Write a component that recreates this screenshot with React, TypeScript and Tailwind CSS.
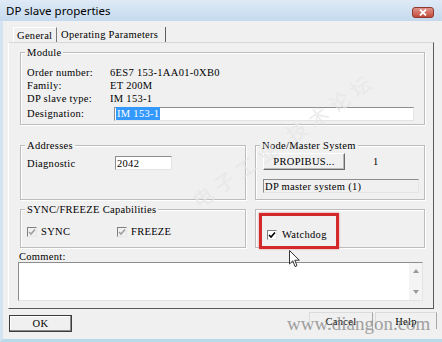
import React from "react";

const mono = "font-['Liberation_Serif',serif] text-[10.5px] leading-[13px] tracking-[0.3px] text-black";

function GroupBox({ label, className, children }: { label?: string; className?: string; children?: React.ReactNode }) {
  return (
    <div className={`relative border border-[#bcbcbc] shadow-[1px_1px_0_#ffffff,inset_1px_1px_0_#ffffff] ${className ?? ""}`}>
      {label && (
        <span className={`absolute -top-[7px] left-[4px] bg-[#f0f0f0] px-[2px] ${mono}`}>{label}</span>
      )}
      {children}
    </div>
  );
}

function Field({ children, className }: { children?: React.ReactNode; className?: string }) {
  return (
    <div
      className={`border-t border-l border-[#8d8d8d] border-r border-b border-r-[#e4e4e4] border-b-[#e4e4e4] flex items-center ${className ?? ""}`}
    >
      {children}
    </div>
  );
}

function CheckBox({ checked, disabled }: { checked?: boolean; disabled?: boolean }) {
  return (
    <span
      className={`inline-flex h-[10px] w-[10px] items-center justify-center border-t border-l border-[#808080] border-r border-b border-r-[#e8e8e8] border-b-[#e8e8e8] ${
        disabled ? "bg-[#f0f0f0]" : "bg-white"
      }`}
    >
      {checked && (
        <svg width="8" height="8" viewBox="0 0 8 8">
          <path d="M1 4 L3 6 L7 1.5" fill="none" stroke={disabled ? "#a0a0a0" : "#000"} strokeWidth="1.6" />
        </svg>
      )}
    </span>
  );
}

function Row({ label, value }: { label: string; value: string }) {
  return (
    <div className={`flex h-[13px] items-center ${mono}`}>
      <span className="w-[84px] pl-[1px]">{label}</span>
      <span>{value}</span>
    </div>
  );
}

export default function App() {
  return (
    <div className="relative flex h-[342px] w-[442px] flex-col overflow-hidden bg-[#f0f0f0]">
      {/* title bar */}
      <div className="flex h-[21px] items-center justify-between bg-gradient-to-b from-[#dfeaf6] to-[#c5d9ee] pl-[6px] pr-[8px]">
        <span className="font-['Noto_Sans',sans-serif] text-[11.5px] text-black">DP slave properties</span>
        <div className="mt-[3px] flex h-[11px] w-[22px] items-center justify-center rounded-[3px] border border-[#8c3a30] bg-gradient-to-b from-[#e0938a] to-[#c2493a]">
          <svg width="8" height="7" viewBox="0 0 8 7">
            <path d="M1 0.5 L7 6.5 M7 0.5 L1 6.5" stroke="#fff" strokeWidth="1.8" />
          </svg>
        </div>
      </div>

      <div className="flex flex-1 flex-col border-l-[3px] border-b-[3px] border-l-[#d4e3f1] border-b-[#b8dbe9]">
        {/* tabs */}
        <div className="mt-[6px] flex h-[15px] pl-[10px]">
          <div className={`flex items-center border-l border-t border-white border-r border-r-[#7a7a7a] px-[3px] w-[44px] ${mono}`}>
            General
          </div>
          <div className={`flex items-center border-r border-[#5e5e5e] pl-[4px] w-[109px] ${mono}`}>
            Operating Parameters
          </div>
        </div>

        {/* tab panel */}
        <div className="ml-[5px] flex h-[267px] w-[426px] flex-col border-t border-l border-t-[#d8d8d8] border-l-white border-r border-b border-r-[#5a5a5a] border-b-[#5a5a5a] pt-[9px]">
          <GroupBox label="Module" className="ml-[11px] h-[73px] w-[405px] pl-[5px] pt-[13px]">
            <Row label="Order number:" value="6ES7 153-1AA01-0XB0" />
            <Row label="Family:" value="ET 200M" />
            <Row label="DP slave type:" value="IM 153-1" />
            <div className={`mt-[1px] flex h-[15px] items-center ${mono}`}>
              <span className="w-[88px] pl-[1px]">Designation:</span>
              <Field className="h-[14px] w-[300px] bg-white pl-[1px]">
                <span className="bg-[#3399ff] px-[1px] text-white">IM 153-1</span>
              </Field>
            </div>
          </GroupBox>

          <div className="ml-[11px] mt-[20px] flex gap-[9px]">
            <GroupBox label="Addresses" className="h-[55px] w-[226px] pl-[5px] pt-[10px]">
              <div className={`flex items-center ${mono}`}>
                <span className="w-[89px] pl-[1px]">Diagnostic</span>
                <Field className="h-[14px] w-[57px] bg-white pl-[1px]">2042</Field>
              </div>
            </GroupBox>
            <GroupBox label="Node/Master System" className="h-[55px] w-[170px] pl-[7px] pt-[7px]">
              <div className="flex items-center">
                <div className={`flex h-[17px] w-[82px] items-center justify-center border-t border-l border-white border-r border-b border-r-[#6a6a6a] border-b-[#6a6a6a] shadow-[inset_-1px_-1px_0_#b8b8b8] ${mono}`}>
                  PROPIBUS...
                </div>
                <span className={`ml-[28px] ${mono}`}>1</span>
              </div>
              <Field className={`mt-[9px] h-[14px] w-[156px] pl-[1px] ${mono}`}>DP master system (1)</Field>
            </GroupBox>
          </div>

          <div className="ml-[11px] mt-[9px] flex gap-[9px]">
            <GroupBox label="SYNC/FREEZE Capabilities" className="flex h-[39px] w-[226px] items-start pl-[6px] pt-[15px]">
              <div className={`flex w-[90px] items-center gap-[4px] ${mono} text-[#9a9a9a]`}>
                <CheckBox checked disabled />
                <span>SYNC</span>
              </div>
              <div className={`flex items-center gap-[4px] ${mono} text-[#9a9a9a]`}>
                <CheckBox checked disabled />
                <span>FREEZE</span>
              </div>
            </GroupBox>
            <GroupBox className="h-[39px] w-[170px] pl-[3px] pt-[3px]">
              <div className="h-[36px] w-[80px] border-[3px] border-[#d22a2a] pl-[5px] pt-[12px] shadow-[0_0_2px_#e88]">
                <div className={`flex items-center gap-[5px] ${mono}`}>
                  <CheckBox checked />
                  <span>Watchdog</span>
                </div>
              </div>
            </GroupBox>
          </div>

          <div className={`ml-[10px] mt-[2px] h-[12px] ${mono}`}>Comment:</div>
          <Field className="ml-[9px] h-[39px] w-[405px] items-stretch bg-white">
            <div className="flex-1" />
            <div className="flex w-[13px] flex-col items-center justify-between bg-[#f4f4f4] py-[6px]">
              <svg width="6" height="4" viewBox="0 0 6 4"><path d="M0 4 L3 0 L6 4 Z" fill="#9a9a9a" /></svg>
              <svg width="6" height="4" viewBox="0 0 6 4"><path d="M0 0 L3 4 L6 0 Z" fill="#9a9a9a" /></svg>
            </div>
          </Field>
        </div>

        {/* buttons */}
        <div className="mt-[6px] flex pl-[6px] pr-[5px]">
          <div className={`flex h-[17px] w-[63px] items-center justify-center border border-[#3c3c3c] shadow-[inset_-1px_-1px_0_#8a8a8a,inset_1px_1px_0_#ffffff] ${mono}`}>
            OK
          </div>
          <div className="flex-1" />
          <div className={`-mt-[3px] flex h-[17px] w-[64px] items-center justify-center border-t border-l border-[#dcdcdc] border-r border-r-[#a8a8a8] ${mono}`}>
            Cancel
          </div>
          <div className={`-mt-[3px] ml-[2px] flex h-[17px] w-[62px] items-center justify-center border-t border-l border-[#dcdcdc] border-r border-r-[#a8a8a8] ${mono}`}>
            Help
          </div>
        </div>
      </div>

      {/* faint watermark */}
      <div className="pointer-events-none absolute left-[175px] top-[125px] -rotate-[35deg] font-['Noto_Sans_CJK_SC',sans-serif] text-[20px] tracking-[6px] text-[#e6e6e6] opacity-70">
        电子工业 技术论坛
      </div>
      <div className="pointer-events-none absolute left-[287px] top-[310px] font-['Liberation_Serif',serif] text-[19px] text-[#8c8c8c] opacity-80">
        www.diangon.com
      </div>

      {/* mouse cursor */}
      <svg className="absolute left-[289px] top-[250px]" width="12" height="18" viewBox="0 0 12 18">
        <path d="M0.5 0.5 L0.5 14 L3.8 10.8 L6 16.5 L8 15.7 L5.8 10.2 L10.3 10.2 Z" fill="#fff" stroke="#333" strokeWidth="1" />
      </svg>
    </div>
  );
}
